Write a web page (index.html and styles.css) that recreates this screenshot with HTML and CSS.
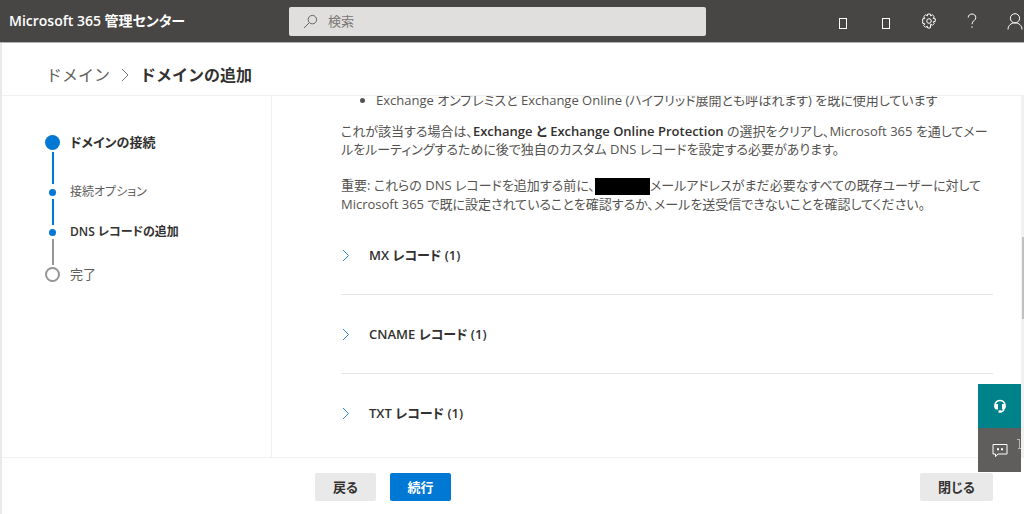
FILE: index.html
```
<!DOCTYPE html>
<html lang="ja">
<head>
<meta charset="utf-8">
<meta name="viewport" content="width=device-width, initial-scale=1">
<title>Microsoft 365 管理センター</title>
<link rel="stylesheet" href="styles.css">
</head>
<body>
<header class="topbar">
  <div class="brand">Microsoft 365 管理センター</div>
  <label class="search">
    <svg class="search-icon" viewBox="0 0 16 16" aria-hidden="true"><circle cx="10" cy="6" r="4.5"/><path d="M6.8 9.2 1 15"/></svg>
    <input class="search-input" type="search" placeholder="検索" aria-label="検索">
  </label>
  <div class="tools">
    <button class="tool" type="button" aria-label="アプリ"><span class="tofu"></span></button>
    <button class="tool" type="button" aria-label="通知"><span class="tofu"></span></button>
    <button class="tool" type="button" aria-label="設定">
      <svg viewBox="0 0 16 16" aria-hidden="true"><path d="M6.700 1h2.600l.4 1.900 1.700-1.100 1.900 1.900-1.100 1.700 2.100.4v2.500l-2.100.5 1.100 1.600-1.900 1.900-1.700-1.100L9.300 15H6.700l-.4-1.800-1.700 1.100-1.900-1.900 1.100-1.600-2.100-.5V5.800l2.100-.4-1.100-1.700 1.900-1.900 1.700 1.100z"/><circle cx="8" cy="8" r="2.300"/></svg>
    </button>
    <button class="tool" type="button" aria-label="ヘルプ">
      <svg viewBox="0 0 16 16" aria-hidden="true"><path d="M4.200 4.600C4.200 2.400 5.800 1 8 1s3.800 1.400 3.800 3.500C11.800 7.600 8 7.700 8 11.200"/><path d="M8 13.300v1.500"/></svg>
    </button>
    <button class="tool" type="button" aria-label="アカウント">
      <svg viewBox="0 0 16 16" aria-hidden="true"><circle cx="8" cy="5.300" r="4.600"/><path d="M1 16.500C1 12.500 4 9.900 8 9.900s7 2.600 7 6.600"/></svg>
    </button>
  </div>
</header>
<div class="page">
  <nav class="crumbs" aria-label="階層">
    <a class="crumb" href="#">ドメイン</a>
    <svg class="crumb-sep" viewBox="0 0 8 14" aria-hidden="true"><path d="M1 1l6 6-6 6"/></svg>
    <h1 class="crumb-now">ドメインの追加</h1>
  </nav>
  <div class="body">
    <ol class="steps">
      <li class="step step-main step-bold"><span class="dot"></span>ドメインの接続</li>
      <li class="line line-long"></li>
      <li class="step"><span class="dot dot-small"></span>接続オプション</li>
      <li class="line"></li>
      <li class="step step-bold"><span class="dot dot-small"></span>DNS レコードの追加</li>
      <li class="line line-todo"></li>
      <li class="step step-main"><span class="dot dot-open"></span>完了</li>
    </ol>
    <main class="content">
      <ul class="bullets"><li>Exchange オンプレミスと Exchange Online (ハイブリッド展開とも呼ばれます) を既に使用しています</li></ul>
      <p class="para">これが該当する場合は、<strong>Exchange と Exchange Online Protection</strong> の選択をクリアし、Microsoft 365 を通してメー<br>ルをルーティングするために後で独自のカスタム DNS レコードを設定する必要があります。</p>
      <p class="para">重要: これらの DNS レコードを追加する前に、<span class="redacted"></span>メールアドレスがまだ必要なすべての既存ユーザーに対して<br>Microsoft 365 で既に設定されていることを確認するか、メールを送受信できないことを確認してください。</p>
      <div class="records">
        <button class="record" type="button"><svg viewBox="0 0 8 14" aria-hidden="true"><path d="M1 2l5.500 5.500L1 13"/></svg>MX レコード (1)</button>
        <button class="record" type="button"><svg viewBox="0 0 8 14" aria-hidden="true"><path d="M1 2l5.500 5.500L1 13"/></svg>CNAME レコード (1)</button>
        <button class="record" type="button"><svg viewBox="0 0 8 14" aria-hidden="true"><path d="M1 2l5.500 5.500L1 13"/></svg>TXT レコード (1)</button>
      </div>
    </main>
  </div>
  <span class="thumb"></span>
</div>
<footer class="actions">
  <button class="btn" type="button">戻る</button>
  <button class="btn btn-primary" type="button">続行</button>
  <button class="btn btn-close" type="button">閉じる</button>
</footer>
<aside class="float">
  <button class="float-btn float-help" type="button" aria-label="サポート">
    <svg viewBox="0 0 16 16" aria-hidden="true"><path class="band" d="M4 11C2 9 2.500 2.500 8 2.500S14 9 12 11c-.3 1.800-1.300 2.700-3 2.700"/><path class="solid" d="M3 6h3v5.500H4.500L3 10zM10 6h3v4l-1.500 1.500H10zM6.500 12.300h3v2.500h-3z"/></svg>
  </button>
  <button class="float-btn" type="button" aria-label="フィードバック">
    <svg viewBox="0 0 16 16" aria-hidden="true"><path class="outline" d="M1 2.500h14V12H6l-2.500 2.700V12H1z"/><path class="solid" d="M5 6.200h2v2H5zM9 6.200h2v2H9z"/></svg>
    <svg class="edge" viewBox="0 0 4 12" aria-hidden="true"><path d="M0 1.500h3M2.500 1v9M1 10.500h3"/></svg>
  </button>
</aside>
</body>
</html>
```
FILE: styles.css
```
* { box-sizing: border-box; }
body {
  margin: 0;
  height: 100vh;
  display: flex;
  flex-direction: column;
  overflow: hidden;
  background: #fff;
  color: #555351;
  font: 13px/18px "Open Sans", "Noto Sans CJK JP", sans-serif;
  font-feature-settings: "palt";
}
button, input { font: inherit; font-feature-settings: inherit; color: inherit; border: 0; padding: 0; background: none; }
button { cursor: pointer; }
svg { fill: none; stroke: currentColor; flex: none; }

.topbar {
  flex: none;
  display: grid;
  grid-template-columns: 280px minmax(0, 417px) 1fr;
  align-items: center;
  height: 43px;
  padding-left: 9px;
  background: #484644;
  border-bottom: 1px solid #b5b4b3;
  color: #fff;
}
.brand { font-size: 14px; font-weight: 600; white-space: nowrap; }
.search {
  display: flex;
  align-items: center;
  gap: 10px;
  height: 29px;
  padding: 0 14px;
  border-radius: 2px;
  background: #e1dfdd;
  color: #605e5c;
}
.search-icon { width: 15px; height: 15px; }
.search-input { flex: 1; min-width: 0; outline: 0; }
.search-input::placeholder { color: #797775; opacity: 1; }
.tools { display: flex; justify-content: flex-end; overflow: hidden; margin-right: -12px; }
.tool { display: flex; align-items: center; justify-content: center; width: 43px; height: 42px; }
.tool svg { width: 16px; height: 16px; overflow: visible; }
.tofu { width: 8px; height: 11px; margin-top: 4px; border: 1px solid #fff; }

.page {
  position: relative;
  flex: 1;
  min-height: 0;
  display: flex;
  flex-direction: column;
  border-left: 2px solid #e9e9e9;
}
.crumbs {
  flex: none;
  display: flex;
  align-items: center;
  gap: 11px;
  height: 53px;
  padding: 12px 44px 0;
  border-bottom: 1px solid #f1f1f1;
  font-size: 16px;
  font-feature-settings: normal;
}
.crumb { color: #605e5c; text-decoration: none; }
.crumb-sep { width: 8px; height: 14px; color: #797775; }
.crumb-now { margin: 0; font-size: 16px; font-weight: 700; color: #323130; }

.body { flex: 1; min-height: 0; display: flex; border-right: 3px solid #f1f1f1; }
.steps {
  flex: none;
  width: 270px;
  margin: 0;
  padding: 37px 20px 0 43px;
  list-style: none;
  border-right: 1px solid #f1f1f1;
}
.step { display: flex; align-items: center; gap: 10px; height: 18px; font-size: 12px; color: #605e5c; }
.step-main { font-size: 13px; }
.step-bold { font-weight: 600; color: #323130; }
.dot { flex: none; width: 15px; height: 15px; border-radius: 50%; background: #0078d4; }
.dot-small { width: 7px; height: 7px; margin: 0 4px; }
.dot-open { background: #fff; border: 2px solid #979593; }
.line { width: 2px; height: 26px; margin: -2px 0 -2px 7px; background: #0078d4; }
.line-long { height: 32px; margin: 1px 0 -1px 7px; }
.line-todo { background: #979593; margin-bottom: 0; }

.content { flex: 1; min-width: 0; overflow: hidden; padding: 0 28px 0 69px; }
.bullets { margin: -5px 0 0; padding-left: 35px; }
.para { margin: 13px 0 0; white-space: nowrap; }
.para + .para { margin-top: 18px; }
.para strong { font-weight: 600; color: #323130; }
.redacted { display: inline-block; width: 55px; height: 17px; vertical-align: middle; background: #000; }
.records { margin-top: 3px; }
.record {
  display: flex;
  align-items: center;
  gap: 19px;
  width: 100%;
  height: 78px;
  padding-left: 1px;
  font-weight: 600;
  color: #323130;
}
.record + .record { height: 79px; border-top: 1px solid #e5e5e5; }
.record svg { width: 8px; height: 14px; color: #2b88d8; }
.thumb { position: absolute; right: 0; top: 194px; width: 2px; height: 82px; background: #c1c1c1; }

.actions {
  flex: none;
  display: flex;
  align-items: flex-start;
  gap: 14px;
  height: 57px;
  padding: 16px 31px 0 313px;
  border-left: 2px solid #e9e9e9;
  box-shadow: inset 0 1px #f1f1f1;
}
.btn { min-width: 61px; height: 28px; border-radius: 2px; background: #e9e9e9; color: #323130; font-weight: 600; }
.btn-primary { background: #0078d4; color: #fff; }
.btn-close { min-width: 73px; margin-left: auto; }

.float { position: absolute; right: 3px; bottom: 42px; width: 43px; }
.float-btn { position: relative; display: flex; align-items: center; justify-content: center; width: 43px; height: 44px; background: #605e5c; color: #fff; }
.float-help { background: #00828a; }
.float svg { width: 16px; height: 16px; }
.float .edge { position: absolute; right: 0; top: 10px; width: 4px; height: 12px; color: #b5b4b3; }
.band { stroke-width: 1.5; }
.solid { fill: currentColor; stroke: none; }
```
